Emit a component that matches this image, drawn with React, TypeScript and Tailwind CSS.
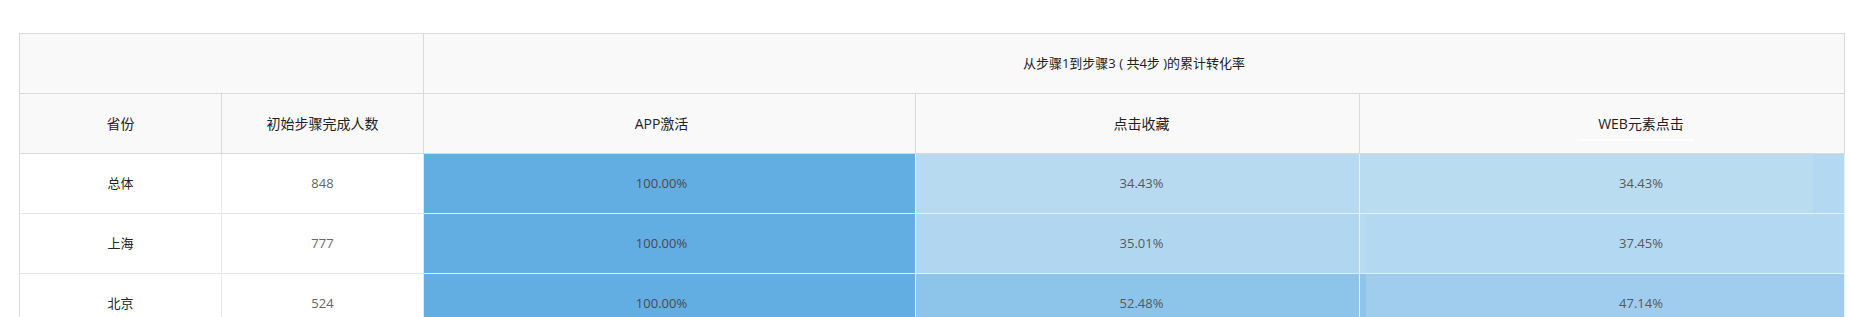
import React from "react";

const FONT = { fontFamily: '"Open Sans", "Noto Sans CJK SC", sans-serif' };

type Row = {
  name: string;
  count: string;
  c3: string;
  c4: string;
  c5: string;
  bg4: string;
  bg5: string;
  strip: "r1" | "r2" | "r3";
};

const rows: Row[] = [
  { name: "总体", count: "848", c3: "100.00%", c4: "34.43%", c5: "34.43%", bg4: "bg-[#b7daf1]", bg5: "bg-[#b9dcf1]", strip: "r1" },
  { name: "上海", count: "777", c3: "100.00%", c4: "35.01%", c5: "37.45%", bg4: "bg-[#b1d7f0]", bg5: "bg-[#b3d8f1]", strip: "r2" },
  { name: "北京", count: "524", c3: "100.00%", c4: "52.48%", c5: "47.14%", bg4: "bg-[#8cc4ea]", bg5: "bg-[#a0cded]", strip: "r3" },
];

export default function App() {
  return (
    <div className="w-[1850px] h-[317px] overflow-hidden bg-white pt-[33px] pl-[19px]" style={FONT}>
      <div className="w-[1826px] border-l border-t border-[#d9d9d9]">
        {/* header row 1 */}
        <div className="flex h-[60px]">
          <div className="w-[404px] shrink-0 bg-[#f9f9f9] border-r border-b border-[#d9d9d9]" />
          <div className="w-[1421px] shrink-0 bg-[#f9f9f9] border-r border-b border-[#d9d9d9] flex items-center justify-center text-[13px] text-[#222] whitespace-pre">
            从步骤1到步骤3 ( 共4步 )的累计转化率
          </div>
        </div>
        {/* header row 2 */}
        <div className="flex h-[60px] text-[14px] text-[#222]">
          <div className="w-[202px] shrink-0 bg-[#f9f9f9] border-r border-b border-[#d9d9d9] flex items-center justify-center">省份</div>
          <div className="w-[202px] shrink-0 bg-[#f9f9f9] border-r border-b border-[#d9d9d9] flex items-center justify-center">初始步骤完成人数</div>
          <div className="w-[492px] shrink-0 bg-[#f9f9f9] border-r border-b border-[#d9d9d9] flex items-center justify-center pr-[16px]">APP激活</div>
          <div className="w-[444px] shrink-0 bg-[#f9f9f9] border-r border-b border-[#d9d9d9] flex items-center justify-center pl-[8px]">点击收藏</div>
          <div className="w-[485px] shrink-0 bg-[#f9f9f9] border-r border-b border-[#d9d9d9] flex items-center justify-center pl-[78px]">
            <span className="relative">
              WEB元素点击
              <span className="absolute left-[-21px] top-[26px] w-[117px] h-[2px] bg-white" />
            </span>
          </div>
        </div>
        {/* body */}
        {rows.map((r) => (
          <div key={r.name} className="flex h-[60px] text-[13px] text-[#595959]">
            <div className="w-[202px] shrink-0 bg-white border-r border-b border-[#e6e6e6] flex items-center justify-center text-[#222]">{r.name}</div>
            <div className="w-[202px] shrink-0 bg-white border-r border-b border-[#e6e6e6] flex items-center justify-center text-[#666]">{r.count}</div>
            <div className="w-[492px] shrink-0 bg-[#62aee2] border-r border-b border-[#e4f0f9] flex items-center justify-center pr-[16px] text-[#4a4a4a]">{r.c3}</div>
            <div className={`w-[444px] shrink-0 ${r.bg4} border-r border-b border-[#e4f0f9] flex items-center justify-center pl-[8px]`}>{r.c4}</div>
            <div className={`relative w-[485px] shrink-0 ${r.bg5} border-r border-b border-[#e4f0f9] flex items-center justify-center pl-[78px]`}>
              {r.strip === "r1" && <span className="absolute right-0 top-0 bottom-0 w-[31px] bg-[#b3d8f1]" />}
              {r.strip === "r2" && <span className="absolute left-0 top-0 bottom-0 w-[6px] bg-[#b8dbf1]" />}
              {r.strip === "r3" && <span className="absolute left-0 top-0 bottom-0 w-[6px] bg-[#8ec5ea]" />}
              <span className="relative">{r.c5}</span>
            </div>
          </div>
        ))}
      </div>
    </div>
  );
}
